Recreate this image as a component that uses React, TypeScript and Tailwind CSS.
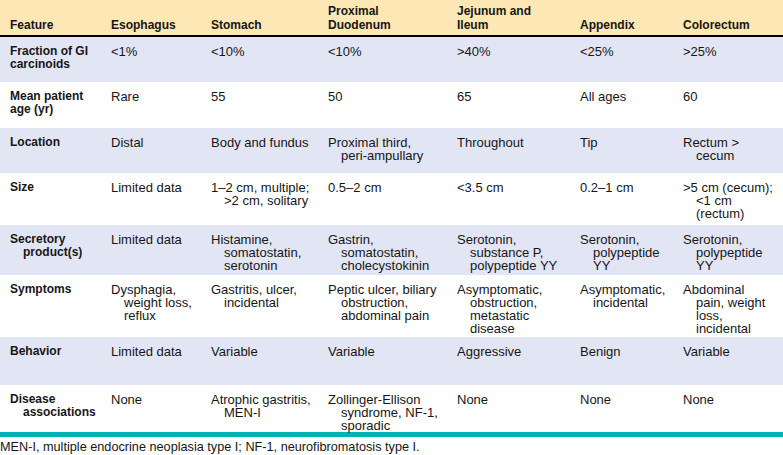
const cols = ["w-[101px]", "w-[100px]", "w-[117px]", "w-[129px]", "w-[123px]", "w-[103px]", "w-[110px]"];

type Row = { h: string; shade: boolean; cells: string[][] };

const header: string[][] = [
  ["Feature"],
  ["Esophagus"],
  ["Stomach"],
  ["Proximal", "Duodenum"],
  ["Jejunum and", "Ileum"],
  ["Appendix"],
  ["Colorectum"],
];

const rows: Row[] = [
  {
    h: "h-[45px]",
    shade: true,
    cells: [["Fraction of GI", "carcinoids"], ["<1%"], ["<10%"], ["<10%"], [">40%"], ["<25%"], [">25%"]],
  },
  {
    h: "h-[46px]",
    shade: false,
    cells: [["Mean patient", "age (yr)"], ["Rare"], ["55"], ["50"], ["65"], ["All ages"], ["60"]],
  },
  {
    h: "h-[45px]",
    shade: true,
    cells: [
      ["Location"],
      ["Distal"],
      ["Body and fundus"],
      ["Proximal third,", "peri-ampullary"],
      ["Throughout"],
      ["Tip"],
      ["Rectum >", "cecum"],
    ],
  },
  {
    h: "h-[52px]",
    shade: false,
    cells: [
      ["Size"],
      ["Limited data"],
      ["1–2 cm, multiple;", ">2 cm, solitary"],
      ["0.5–2 cm"],
      ["<3.5 cm"],
      ["0.2–1 cm"],
      [">5 cm (cecum);", "<1 cm", "(rectum)"],
    ],
  },
  {
    h: "h-[50px]",
    shade: true,
    cells: [
      ["Secretory", "product(s)"],
      ["Limited data"],
      ["Histamine,", "somatostatin,", "serotonin"],
      ["Gastrin,", "somatostatin,", "cholecystokinin"],
      ["Serotonin,", "substance P,", "polypeptide YY"],
      ["Serotonin,", "polypeptide", "YY"],
      ["Serotonin,", "polypeptide", "YY"],
    ],
  },
  {
    h: "h-[62px]",
    shade: false,
    cells: [
      ["Symptoms"],
      ["Dysphagia,", "weight loss,", "reflux"],
      ["Gastritis, ulcer,", "incidental"],
      ["Peptic ulcer, biliary", "obstruction,", "abdominal pain"],
      ["Asymptomatic,", "obstruction,", "metastatic", "disease"],
      ["Asymptomatic,", "incidental"],
      ["Abdominal", "pain, weight", "loss,", "incidental"],
    ],
  },
  {
    h: "h-[48px]",
    shade: true,
    cells: [["Behavior"], ["Limited data"], ["Variable"], ["Variable"], ["Aggressive"], ["Benign"], ["Variable"]],
  },
  {
    h: "h-[47px]",
    shade: false,
    cells: [
      ["Disease", "associations"],
      ["None"],
      ["Atrophic gastritis,", "MEN-I"],
      ["Zollinger-Ellison", "syndrome, NF-1,", "sporadic"],
      ["None"],
      ["None"],
      ["None"],
    ],
  },
];

// first-column labels whose second line is not hung
const flatLabels = ["Fraction of GI", "Mean patient"];

function Cell({ lines, col, bold }: { lines: string[]; col: number; bold: boolean }) {
  const hang = !(col === 0 && flatLabels.includes(lines[0]));
  return (
    <div className={`${cols[col]} shrink-0 pl-[10px] pt-[8px] whitespace-nowrap`}>
      {lines.map((l, i) => (
        <div
          key={i}
          className={`${bold ? "text-[12px] font-bold" : "text-[13px]"} leading-[13px] ${i > 0 && hang ? "pl-[13px]" : ""}`}
        >
          {l}
        </div>
      ))}
    </div>
  );
}

export default function App() {
  return (
    <div className="w-[783px] h-[455px] bg-white text-[#161616] font-['Liberation_Sans',Arial,sans-serif] overflow-hidden">
      <div className="flex h-[37px] bg-[#fde7b4] border-b-2 border-black items-end pb-[3px]">
        {header.map((lines, i) => (
          <div key={i} className={`${cols[i]} shrink-0 pl-[10px] whitespace-nowrap`}>
            {lines.map((l, j) => (
              <div key={j} className="text-[12px] font-bold leading-[13.5px]">
                {l}
              </div>
            ))}
          </div>
        ))}
      </div>

      {rows.map((r, ri) => (
        <div key={ri} className={`flex ${r.h} ${r.shade ? "bg-[#e2e5f4]" : "bg-white"}`}>
          {r.cells.map((lines, ci) => (
            <Cell key={ci} lines={lines} col={ci} bold={ci === 0} />
          ))}
        </div>
      ))}

      <div className="h-[5px] bg-[#00b3b5]" />
      <div className="pt-[3px] text-[12.7px] leading-[14px]">
        MEN-I, multiple endocrine neoplasia type I; NF-1, neurofibromatosis type I.
      </div>
    </div>
  );
}
